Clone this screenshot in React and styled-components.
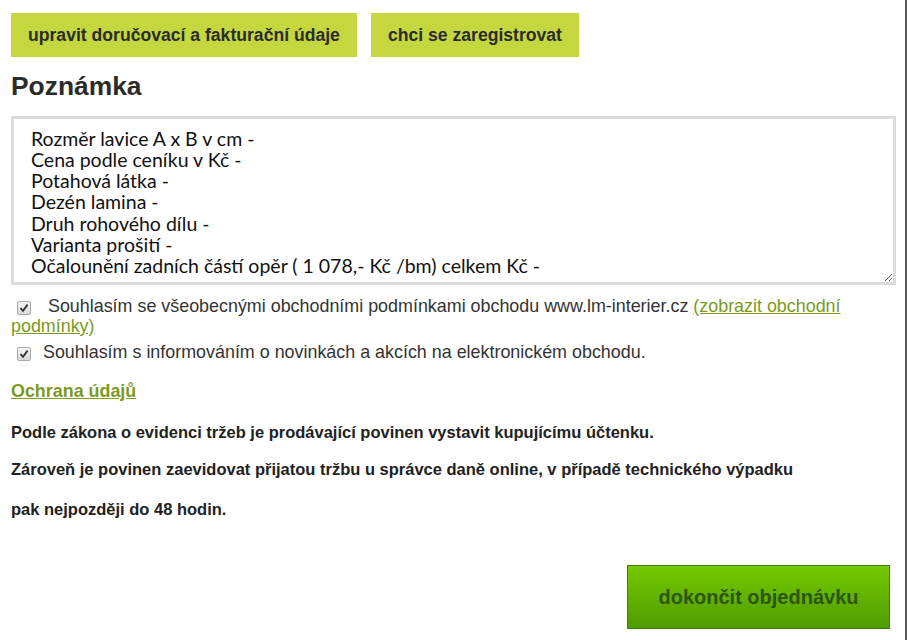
import React from 'react';
import styled, { createGlobalStyle } from 'styled-components';

const GlobalStyle = createGlobalStyle`
  html, body {
    margin: 0;
    padding: 0;
    background: #fff;
  }
  body {
    font-family: "Liberation Sans", Arial, sans-serif;
    color: #333;
  }
`;

const Page = styled.div`
  box-sizing: border-box;
  width: 907px;
  min-height: 640px;
  padding: 13px 2px 0 11px;
  border-right: 2px solid #5b5b5b;
`;

const ButtonRow = styled.div`
  display: flex;
  gap: 14px;
`;

const LimeButton = styled.button`
  height: 44px;
  padding: 0 17px;
  border: none;
  background: #c4d73f;
  color: #2b2b2b;
  font-family: "Liberation Sans", Arial, sans-serif;
  font-size: 17.6px;
  font-weight: bold;
  cursor: pointer;
`;

const Heading = styled.h2`
  margin: 14px 0 15px;
  font-size: 26.4px;
  line-height: 30px;
  font-weight: bold;
  color: #2b2b2b;
`;

const NoteArea = styled.textarea`
  display: block;
  box-sizing: border-box;
  width: 885px;
  height: 169px;
  margin: 0;
  padding: 8.5px 17px 0;
  border: 3px solid #dcdcdc;
  font-family: Lato, "Open Sans", sans-serif;
  font-size: 19.5px;
  line-height: 21.3px;
  color: #111;
  overflow: hidden;
  resize: both;
  outline: none;
`;

const Consent = styled.div`
  margin-top: ${({ $top }) => $top}px;
  font-size: 17.9px;
  line-height: 20.5px;
  color: #333;
`;

const Box = styled.span`
  display: inline-flex;
  align-items: center;
  justify-content: center;
  box-sizing: border-box;
  width: 14px;
  height: 14px;
  margin: 0 7px 0 6px;
  vertical-align: -1px;
  border: 1px solid #a9a9a9;
  border-radius: 2px;
  background: linear-gradient(#f6f6f6, #d9d9d9);
`;

const GreenLink = styled.a`
  color: #7b9a1e;
  text-decoration: underline;
  font-weight: ${({ $bold }) => ($bold ? 'bold' : 'normal')};
`;

const Privacy = styled.div`
  margin-top: 18.5px;
  font-size: 17.9px;
  line-height: 21px;
`;

const Notice = styled.p`
  margin: ${({ $top }) => $top}px 0 0;
  font-size: 16.5px;
  line-height: 20px;
  font-weight: bold;
  color: #222;
`;

const Footer = styled.div`
  display: flex;
  justify-content: flex-end;
  padding-right: 13px;
  margin-top: 46px;
`;

const SubmitButton = styled.button`
  box-sizing: border-box;
  width: 263px;
  height: 64px;
  border: 1px solid #3f7c0c;
  background: linear-gradient(#74c900, #4e9c00);
  color: #2c5512;
  font-family: "Liberation Sans", Arial, sans-serif;
  font-size: 20px;
  font-weight: bold;
  cursor: pointer;
`;

const Checkbox = () => (
  <Box>
    <svg width="10" height="10" viewBox="0 0 10 10">
      <path d="M1.5 5.2 L4 7.8 L8.6 1.6" fill="none" stroke="#333" strokeWidth="1.8" />
    </svg>
  </Box>
);

const noteText = [
  'Rozměr lavice A x B v cm -',
  'Cena podle ceníku v Kč -',
  'Potahová látka -',
  'Dezén lamina -',
  'Druh rohového dílu -',
  'Varianta prošití -',
  'Očalounění zadních částí opěr ( 1 078,- Kč /bm) celkem Kč -',
  '',
].join('\n');

const App = () => (
  <Page>
    <GlobalStyle />
    <ButtonRow>
      <LimeButton>upravit doručovací a fakturační údaje</LimeButton>
      <LimeButton>chci se zaregistrovat</LimeButton>
    </ButtonRow>

    <Heading>Poznámka</Heading>
    <NoteArea defaultValue={noteText} />

    <Consent $top={10.5}>
      <Checkbox />
      {'\u00a0 '}Souhlasím se všeobecnými obchodními podmínkami obchodu www.lm-interier.cz{' '}
      <GreenLink href="#">(zobrazit obchodní podmínky)</GreenLink>
    </Consent>
    <Consent $top={5}>
      <Checkbox /> Souhlasím s informováním o novinkách a akcích na elektronickém obchodu.
    </Consent>

    <Privacy>
      <GreenLink href="#" $bold>Ochrana údajů</GreenLink>
    </Privacy>

    <Notice $top={20.5}>Podle zákona o evidenci tržeb je prodávající povinen vystavit kupujícímu účtenku.</Notice>
    <Notice $top={17}>
      Zároveň je povinen zaevidovat přijatou tržbu u správce daně online, v případě technického výpadku
      <br />
      <br />
      pak nejpozději do 48 hodin.
    </Notice>

    <Footer>
      <SubmitButton>dokončit objednávku</SubmitButton>
    </Footer>
  </Page>
);

export default App;
